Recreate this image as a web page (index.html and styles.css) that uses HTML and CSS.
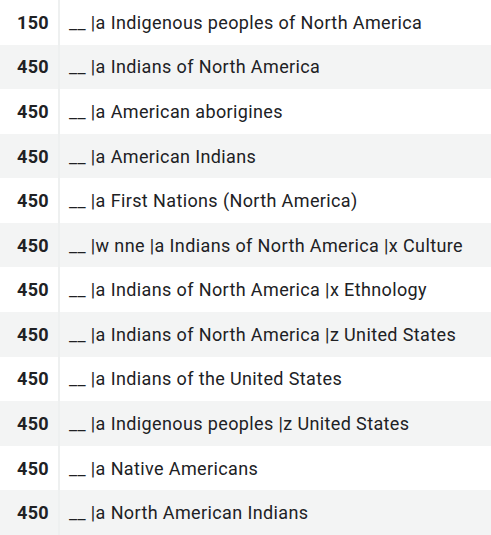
FILE: index.html
```html
<!DOCTYPE html>
<html>
<head>
<meta charset="utf-8">
<link rel="stylesheet" href="styles.css">
</head>
<body>
<table class="marc">
  <tbody>
    <tr><td class="tag">150</td><td class="val">__ |a Indigenous peoples of North America</td></tr>
    <tr><td class="tag">450</td><td class="val">__ |a Indians of North America</td></tr>
    <tr><td class="tag">450</td><td class="val">__ |a American aborigines</td></tr>
    <tr><td class="tag">450</td><td class="val">__ |a American Indians</td></tr>
    <tr><td class="tag">450</td><td class="val">__ |a First Nations (North America)</td></tr>
    <tr><td class="tag">450</td><td class="val">__ |w nne |a Indians of North America |x Culture</td></tr>
    <tr><td class="tag">450</td><td class="val">__ |a Indians of North America |x Ethnology</td></tr>
    <tr><td class="tag">450</td><td class="val">__ |a Indians of North America |z United States</td></tr>
    <tr><td class="tag">450</td><td class="val">__ |a Indians of the United States</td></tr>
    <tr><td class="tag">450</td><td class="val">__ |a Indigenous peoples |z United States</td></tr>
    <tr><td class="tag">450</td><td class="val">__ |a Native Americans</td></tr>
    <tr><td class="tag">450</td><td class="val">__ |a North American Indians</td></tr>
  </tbody>
</table>
</body>
</html>
```
FILE: styles.css
```css
html, body {
  margin: 0;
  padding: 0;
  background: #ffffff;
}
body {
  font-family: Roboto, "Liberation Sans", sans-serif;
  color: #202124;
}
.marc {
  border-collapse: collapse;
  width: 100%;
}
.marc tr {
  height: 44.58px;
}
.marc tr:nth-child(even) {
  background: #f3f4f4;
}
.tag {
  width: 49px;
  padding: 0 9px 0 0;
  text-align: right;
  font-weight: 700;
  font-size: 18px;
  letter-spacing: 0.3px;
  border-right: 2px solid #eef0f0;
  vertical-align: middle;
}
.val {
  padding: 0 0 0 9px;
  font-size: 18px;
  letter-spacing: 0.38px;
  vertical-align: middle;
  white-space: nowrap;
}
```
